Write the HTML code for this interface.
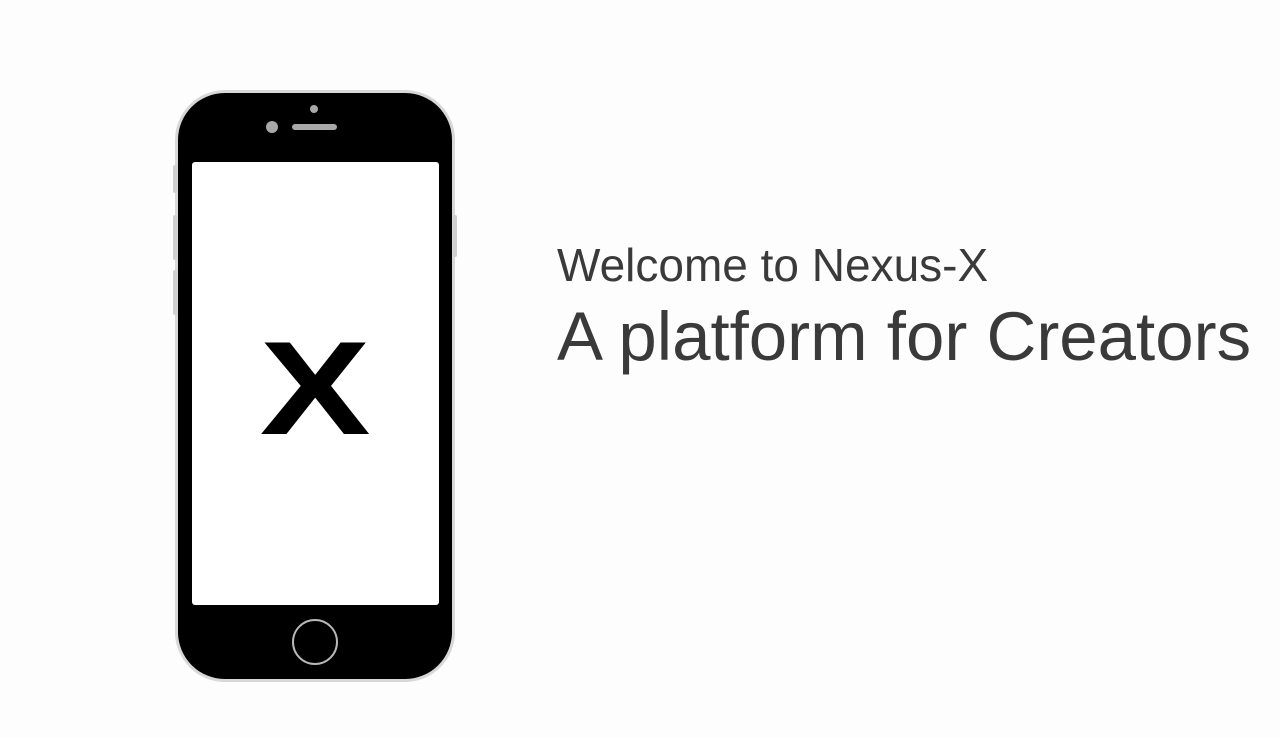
<!DOCTYPE html>
<html><head><style>
html,body{margin:0;padding:0;background:#fdfdfd;width:1280px;height:738px;overflow:hidden;position:relative;font-family:"Liberation Sans",Arial,sans-serif}
.abs{position:absolute}
.t{position:absolute;left:557px;color:#3a3a3a;white-space:nowrap;line-height:1}
</style></head><body>
<div class="abs" style="left:175px;top:90px;width:280px;height:592px;border-radius:50px;background:#d8d8d8"></div>
<div class="abs" style="left:173px;top:165px;width:4px;height:28px;background:#d0d0d0;border-radius:2px"></div>
<div class="abs" style="left:173px;top:215px;width:4px;height:45px;background:#d0d0d0;border-radius:2px"></div>
<div class="abs" style="left:173px;top:270px;width:4px;height:45px;background:#d0d0d0;border-radius:2px"></div>
<div class="abs" style="left:453px;top:215px;width:4px;height:42px;background:#d0d0d0;border-radius:2px"></div>
<div class="abs" style="left:178px;top:93px;width:274px;height:586px;border-radius:47px;background:#000"></div>
<div class="abs" style="left:192px;top:162px;width:247px;height:443px;border-radius:3px;background:#fff"></div>
<div class="abs" style="left:266px;top:121px;width:12px;height:12px;border-radius:50%;background:#a8a8a8"></div>
<div class="abs" style="left:292px;top:124px;width:45px;height:6px;border-radius:3px;background:#a8a8a8"></div>
<div class="abs" style="left:310px;top:105px;width:8px;height:8px;border-radius:50%;background:#a8a8a8"></div>
<div class="abs" style="left:292px;top:619px;width:46px;height:46px;border-radius:50%;border:2.5px solid #b8b8b8;box-sizing:border-box"></div>
<div class="abs" style="left:192px;top:323px;width:247px;text-align:center;font-weight:bold;font-size:133px;line-height:133px;color:#000;transform:scaleX(1.25);transform-origin:125px 0">X</div>
<div class="t" style="top:242px;font-size:46px">Welcome to Nexus-X</div>
<div class="t" style="top:302px;font-size:69px">A platform for Creators</div>
</body></html>
